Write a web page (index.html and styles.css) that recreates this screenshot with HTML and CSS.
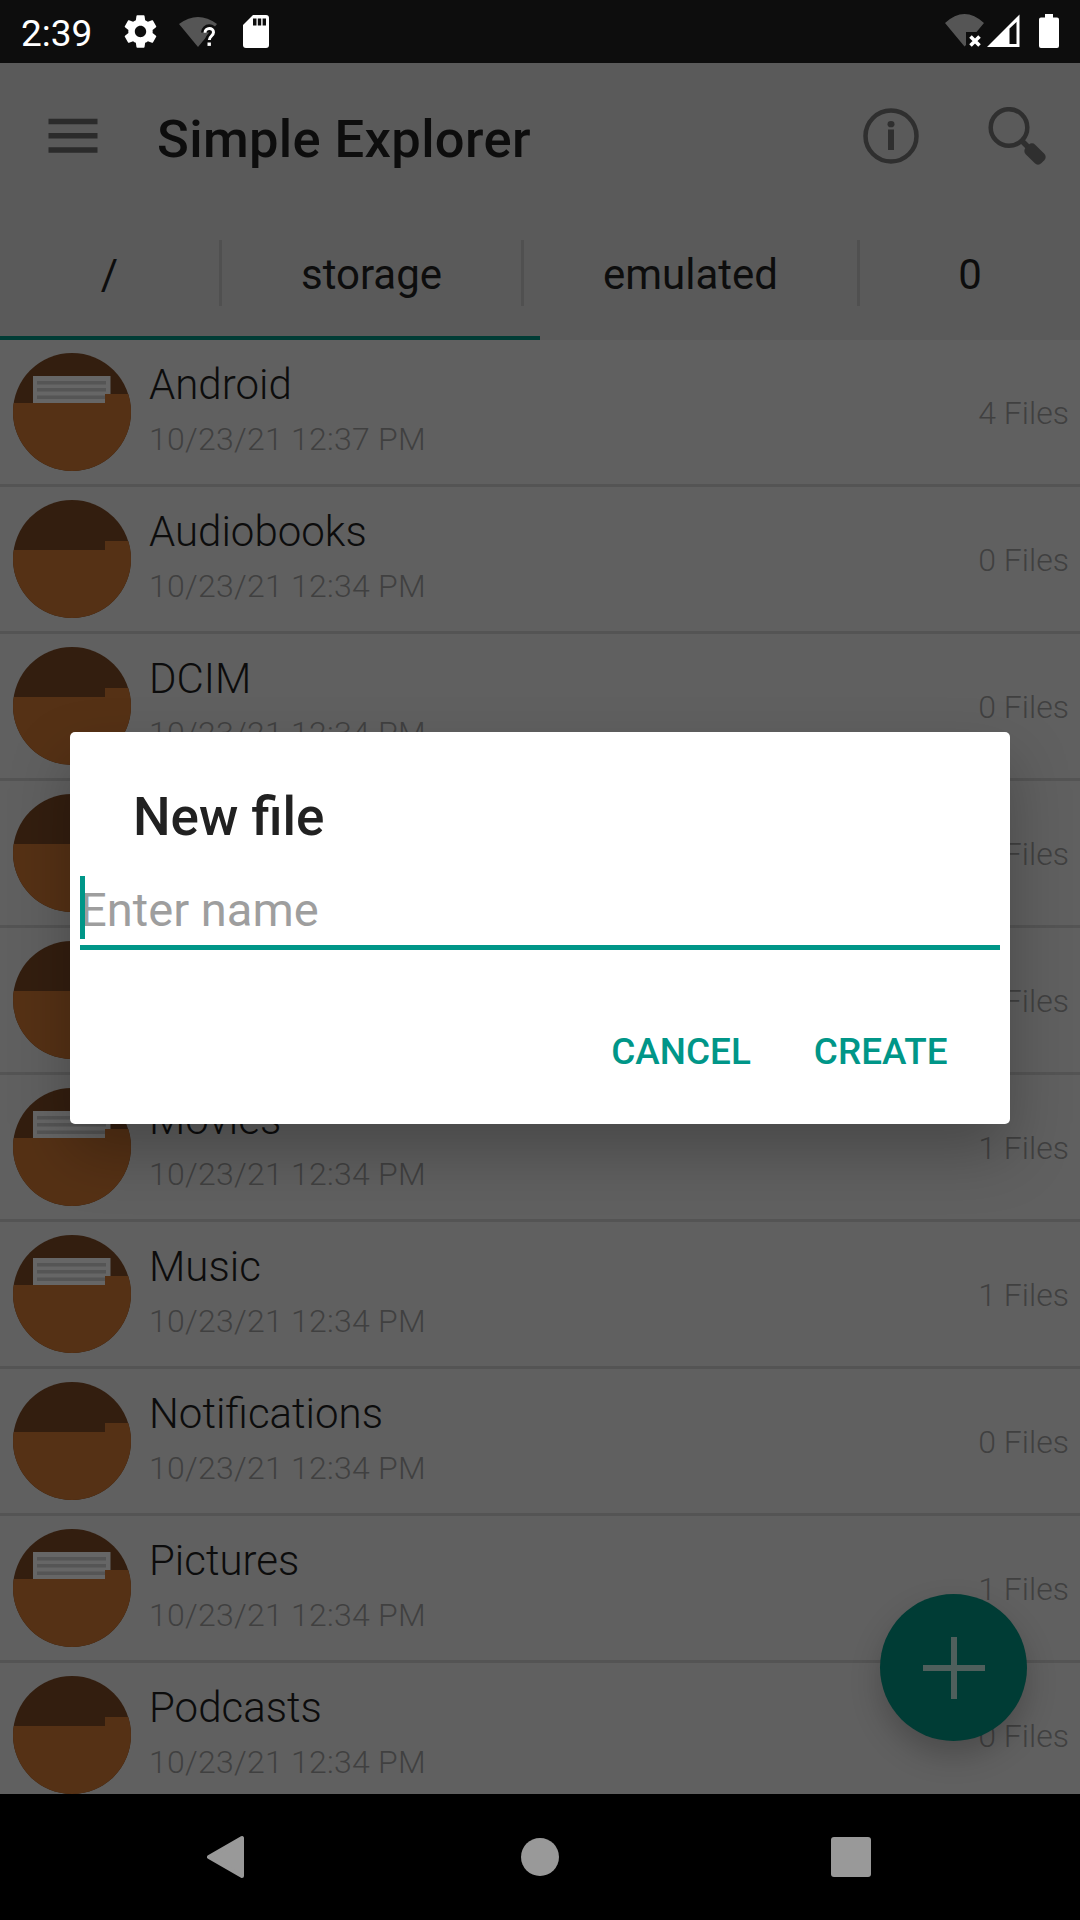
FILE: index.html
```html
<!DOCTYPE html>
<html lang="en">
<head>
<meta charset="utf-8">
<title>Simple Explorer</title>
<link rel="stylesheet" href="styles.css">
</head>
<body>
<svg width="0" height="0" class="defs">
  <defs>
    <clipPath id="disc"><circle cx="59" cy="59" r="59"/></clipPath>
    <symbol id="folder" viewBox="0 0 118 118">
      <g clip-path="url(#disc)">
        <rect width="118" height="118" fill="#331e0f"/>
        <path d="M0 50H92V41H118V118H0Z" fill="#553115"/>
      </g>
    </symbol>
    <symbol id="folder-full" viewBox="0 0 118 118">
      <g clip-path="url(#disc)">
        <rect width="118" height="118" fill="#331e0f"/>
        <rect x="20" y="23" width="77.500" height="30" fill="#666"/>
        <path d="M24 29.700H93M24 36.800H93M24 44.300H93" stroke="#555" stroke-width="3.600"/>
        <path d="M0 50H92V41H118V118H0Z" fill="#553115"/>
      </g>
    </symbol>
  </defs>
</svg>
<div class="screen">
  <div class="status">
    <span class="clock">2:39</span>
    <svg class="gear" width="39" height="39" viewBox="0 0 24 24"><path fill="#fff" d="M19.430 12.980c.04-.32.07-.64.07-.98s-.03-.66-.07-.98l2.110-1.650c.19-.15.24-.42.12-.64l-2-3.460c-.12-.22-.39-.3-.61-.22l-2.490 1c-.52-.4-1.080-.73-1.690-.98l-.38-2.650C14.460 2.180 14.250 2 14 2h-4c-.25 0-.46.18-.49.42l-.38 2.650c-.61.25-1.170.59-1.690.98l-2.490-1c-.23-.09-.49 0-.61.22l-2 3.460c-.13.22-.07.49.12.64l2.110 1.650c-.04.32-.07.65-.07.98s.03.66.07.98l-2.110 1.650c-.19.15-.24.42-.12.64l2 3.460c.12.22.39.3.61.22l2.490-1c.52.4 1.080.73 1.690.98l.38 2.650c.03.24.24.42.49.42h4c.25 0 .46-.18.49-.42l.38-2.650c.61-.25 1.170-.59 1.690-.98l2.490 1c.23.09.49 0 .61-.22l2-3.460c.12-.22.07-.49-.12-.64l-2.110-1.650zM12 15.500c-1.930 0-3.500-1.570-3.500-3.500s1.570-3.500 3.500-3.500 3.500 1.570 3.500 3.500-1.570 3.500-3.500 3.500z"/></svg>
    <svg class="wifi-q" width="40" height="34" viewBox="0 0 40 34"><path fill="#555" d="M0 9Q19 -5 38 9L19 32Z"/><path d="M26 17.500c0-5.500 8.500-5.500 8.500-.2 0 3.700-4.200 3.700-4.200 8" fill="none" stroke="#0d0d0d" stroke-width="8"/><path d="M26 17.700c0-5.500 8.500-5.500 8.500-.4 0 3.700-4.200 3.700-4.200 7.700" fill="none" stroke="#fff" stroke-width="3"/><rect x="28.500" y="27.500" width="3.400" height="3.400" fill="#fff"/></svg>
    <svg class="sd" width="26" height="33" viewBox="0 0 26 33"><path fill="#fff" d="M10 0H23a3 3 0 0 1 3 3V30a3 3 0 0 1-3 3H3a3 3 0 0 1-3-3V10Z"/><path fill="#0d0d0d" d="M10 3.500h3.500v7H10zM14.800 3.500h3.400v7h-3.400zM19.600 3.500h3.400v7h-3.400z"/></svg>
    <div class="status-right">
      <svg width="39" height="34" viewBox="0 0 39 34"><path fill="#555" d="M0 9Q19.500 -9 39 9L31.500 18H21V31L19.500 32.500Z"/><path d="M25.500 22.500l9 9M34.500 22.500l-9 9" stroke="#fff" stroke-width="3.600"/></svg>
      <svg class="signal" width="33" height="34" viewBox="0 0 33 34"><path fill="#fff" fill-rule="evenodd" d="M0 33L32.500 .5V33ZM22.500 14.500V30H29.500V8Z"/></svg>
      <svg class="battery" width="20" height="34" viewBox="0 0 20 34"><path fill="#fff" d="M6 0h8v3.500h4a2 2 0 0 1 2 2V32a2 2 0 0 1-2 2H2a2 2 0 0 1-2-2V5.500a2 2 0 0 1 2-2h4z"/></svg>
    </div>
  </div>

  <header class="header">
    <div class="toolbar">
      <svg class="menu" width="50" height="36" viewBox="0 0 50 36"><path d="M.5 3.500H49.500M.5 17.700H49.500M.5 32H49.500" stroke="#2b2b2b" stroke-width="5.500"/></svg>
      <h1 class="app-title">Simple Explorer</h1>
      <svg class="info" width="56" height="56" viewBox="0 0 56 56"><circle cx="28" cy="28" r="25.500" fill="none" stroke="#2f2f2f" stroke-width="4.500"/><ellipse cx="28" cy="16.200" rx="3.500" ry="3.100" fill="#2f2f2f"/><path d="M25 21.500h6V42h-6z" fill="#2f2f2f"/></svg>
      <svg class="search" width="58" height="58" viewBox="0 0 58 58"><circle cx="21" cy="20.500" r="18.300" fill="none" stroke="#2f2f2f" stroke-width="4.500"/><path d="M33 33L42 42" stroke="#2f2f2f" stroke-width="5.500"/><rect x="-11" y="-6.700" width="22" height="13.400" rx="4.500" transform="translate(47 47) rotate(45)" fill="#2f2f2f"/></svg>
    </div>
    <nav class="crumbs">
      <span class="crumb root">/</span>
      <span class="crumb storage">storage</span>
      <span class="crumb emulated">emulated</span>
      <span class="crumb zero">0</span>
    </nav>
    <div class="indicator"></div>
  </header>

  <main class="list">
    <div class="row"><svg class="icon"><use href="#folder-full"/></svg><div class="text"><div class="name">Android</div><div class="date">10/23/21 12:37 PM</div></div><div class="count">4 Files</div></div>
    <div class="row"><svg class="icon"><use href="#folder"/></svg><div class="text"><div class="name">Audiobooks</div><div class="date">10/23/21 12:34 PM</div></div><div class="count">0 Files</div></div>
    <div class="row"><svg class="icon"><use href="#folder"/></svg><div class="text"><div class="name">DCIM</div><div class="date">10/23/21 12:34 PM</div></div><div class="count">0 Files</div></div>
    <div class="row"><svg class="icon"><use href="#folder"/></svg><div class="text"></div><div class="count">0 Files</div></div>
    <div class="row"><svg class="icon"><use href="#folder"/></svg><div class="text"></div><div class="count">0 Files</div></div>
    <div class="row"><svg class="icon"><use href="#folder-full"/></svg><div class="text"><div class="name">Movies</div><div class="date">10/23/21 12:34 PM</div></div><div class="count">1 Files</div></div>
    <div class="row"><svg class="icon"><use href="#folder-full"/></svg><div class="text"><div class="name">Music</div><div class="date">10/23/21 12:34 PM</div></div><div class="count">1 Files</div></div>
    <div class="row"><svg class="icon"><use href="#folder"/></svg><div class="text"><div class="name">Notifications</div><div class="date">10/23/21 12:34 PM</div></div><div class="count">0 Files</div></div>
    <div class="row"><svg class="icon"><use href="#folder-full"/></svg><div class="text"><div class="name">Pictures</div><div class="date">10/23/21 12:34 PM</div></div><div class="count">1 Files</div></div>
    <div class="row"><svg class="icon"><use href="#folder"/></svg><div class="text"><div class="name">Podcasts</div><div class="date">10/23/21 12:34 PM</div></div><div class="count">0 Files</div></div>
  </main>

  <footer class="navbar">
    <svg width="38" height="44" viewBox="0 0 38 44"><path d="M35 3V41L2 22Z" fill="#999" stroke="#999" stroke-width="4" stroke-linejoin="round"/></svg>
    <svg class="home" width="40" height="40" viewBox="0 0 40 40"><circle cx="20" cy="20" r="19" fill="#999"/></svg>
    <svg width="40" height="40" viewBox="0 0 40 40"><rect width="40" height="40" rx="3" fill="#999"/></svg>
  </footer>

  <div class="fab"><svg width="62" height="62" viewBox="0 0 62 62"><path d="M31 0V62M0 31H62" stroke="#4f5f5c" stroke-width="6"/></svg></div>

  <div class="dialog">
    <h2 class="dialog-title">New file</h2>
    <div class="field"><span class="placeholder">Enter name</span><span class="caret"></span></div>
    <div class="actions"><span class="btn">CANCEL</span><span class="btn">CREATE</span></div>
  </div>
</div>
</body>
</html>
```
FILE: styles.css
```css
* { box-sizing: border-box; }
body { margin: 0; font-family: Roboto, sans-serif; background: #000; }
h1, h2 { margin: 0; font-weight: 500; }
svg { display: block; flex: none; }
.defs { position: absolute; }
.screen { position: relative; width: 1080px; height: 1920px; overflow: hidden; display: flex; flex-direction: column; }

.status { height: 63px; flex: none; display: flex; align-items: flex-start; background: #0d0d0d; color: #fff; }
.clock { width: 120.5px; padding-left: 21px; font-size: 37px; line-height: 67px; }
.gear { margin-top: 12px; }
.wifi-q { margin: 15px 0 0 19.5px; }
.sd { margin: 15px 0 0 24px; }
.status-right { display: flex; margin: 14px 21px 0 auto; }
.signal { margin-left: 3px; }
.battery { margin-left: 19px; }

.header { height: 277px; flex: none; background: #5a5a5a; color: #0d0d0d; }
.toolbar { height: 147px; display: flex; align-items: center; padding: 0 34px 1px 48px; }
.app-title { font-size: 52.5px; line-height: 60px; letter-spacing: .36px; margin: 5px auto 0 59px; }
.info { margin-top: -1px; }
.search { margin: -1px 0 0 69px; }
.crumbs { height: 126px; display: flex; align-items: center; font-size: 42px; }
.crumb { height: 66px; line-height: 69px; text-align: center; border-right: 3px solid #505050; }
.root { width: 222px; }
.storage { width: 302px; }
.emulated { width: 336px; }
.zero { width: 220px; border: 0; }
.indicator { width: 540px; height: 4px; background: #003c35; }

.list { height: 1454px; flex: none; overflow: hidden; background: #606060; }
.row { height: 147px; display: flex; align-items: center; padding: 0 11px 0 13px; border-bottom: 3px solid #545454; font-weight: 300; }
.icon { width: 118px; height: 118px; margin-top: -1px; }
.text { flex: 1; margin-left: 18px; padding-bottom: 2px; }
.name { font-size: 42px; line-height: 56px; color: #0c0c0c; }
.date, .count { font-size: 32px; line-height: 52px; color: #404040; }
.date { letter-spacing: .25px; }
.count { padding-top: 2px; }

.navbar { height: 126px; flex: none; display: flex; align-items: center; justify-content: space-between; padding: 0 209px 0 207px; background: #000; }
.home { margin-left: 4px; }

.fab { position: absolute; left: 880px; top: 1594px; width: 147px; height: 147px; border-radius: 50%; background: #003c35; display: flex; align-items: center; justify-content: center; box-shadow: 0 14px 30px rgba(0,0,0,.22); }

.dialog { position: absolute; left: 70px; top: 732px; width: 940px; height: 392px; border-radius: 5px; background: #fff; padding: 55px 10px 0; box-shadow: 0 28px 60px rgba(0,0,0,.25); }
.dialog-title { font-size: 53px; line-height: 60px; padding-left: 53px; color: #212121; }
.field { position: relative; height: 74px; margin-top: 29px; border-bottom: 5px solid #009688; display: flex; }
.placeholder { font-size: 47.1px; line-height: 67.500px; color: #9e9e9e; }
.caret { position: absolute; left: 0; top: 0; width: 5px; height: 63px; background: #009688; }
.actions { display: flex; justify-content: flex-end; gap: 63px; padding: 80px 52.5px 0 0; }
.btn { font-size: 36.9px; line-height: 44px; font-weight: 500; color: #009688; }
```
